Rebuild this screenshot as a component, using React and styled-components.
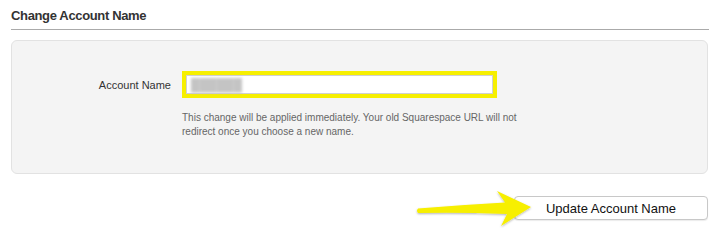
import React from "react";
import styled, { createGlobalStyle } from "styled-components";

const GlobalStyle = createGlobalStyle`
  html, body {
    margin: 0;
    padding: 0;
    background: #ffffff;
    font-family: "Liberation Sans", Arial, sans-serif;
  }
`;

const Page = styled.div`
  width: 717px;
  height: 228px;
  padding: 0 8px 0 11px;
  box-sizing: border-box;
  overflow: hidden;
`;

const Title = styled.h2`
  margin: 0;
  padding: 8px 0 5px;
  font-size: 13px;
  line-height: 16px;
  font-weight: bold;
  letter-spacing: -0.35px;
  color: #333;
  border-bottom: 1px solid #aaa;
`;

const Panel = styled.div`
  margin-top: 10px;
  margin-right: 1px;
  height: 134px;
  box-sizing: border-box;
  padding-top: 30px;
  background: #f4f4f4;
  border: 1px solid #e2e2e2;
  border-radius: 6px;
`;

const Row = styled.div`
  display: flex;
  align-items: center;
  gap: 11px;
`;

const Label = styled.label`
  width: 159px;
  text-align: right;
  font-size: 11px;
  color: #333;
`;

const Field = styled.div`
  width: 315px;
  height: 27px;
  box-sizing: border-box;
  border: 4px solid #f6ef00;
  background: #fff;
  box-shadow: inset 0 0 0 1px #d0d0d0;
  display: flex;
  align-items: center;
  padding-left: 5px;
`;

const Blurred = styled.span`
  font-size: 12px;
  line-height: 12px;
  color: #c4c4c4;
  filter: blur(1.5px);
`;

const Help = styled.p`
  margin: 13px 0 0 170px;
  width: 340px;
  font-size: 10px;
  line-height: 14px;
  color: #666;
`;

const Footer = styled.div`
  position: relative;
  display: flex;
  justify-content: flex-end;
  margin-top: 22px;
  margin-right: 1px;
`;

const Button = styled.button`
  width: 194px;
  height: 24px;
  background: #fff;
  border: 1px solid #c8c8c8;
  border-radius: 4px;
  font-family: "Liberation Sans", Arial, sans-serif;
  font-size: 13px;
  color: #111;
  box-shadow: 0 1px 1px rgba(0, 0, 0, 0.08);
`;

const Arrow = styled.svg`
  position: absolute;
  left: 404px;
  top: -11px;
  overflow: visible;
`;

export default function App() {
  return (
    <Page>
      <GlobalStyle />
      <Title>Change Account Name</Title>
      <Panel>
        <Row>
          <Label>Account Name</Label>
          <Field>
            <Blurred>██████</Blurred>
          </Field>
        </Row>
        <Help>
          This change will be applied immediately. Your old Squarespace URL will not
          redirect once you choose a new name.
        </Help>
      </Panel>
      <Footer>
        <Button>Update Account Name</Button>
        <Arrow width="120" height="42" viewBox="415 186 120 42">
          <defs>
            <filter id="sh" x="-10%" y="-30%" width="120%" height="160%">
              <feDropShadow dx="0" dy="1" stdDeviation="1" floodColor="#000" floodOpacity="0.3" />
            </filter>
          </defs>
          <path
            d="M418 209.5 Q460 206 505 203.5 L497 192 L531 208 L501 227 L507 215 Q460 213 418 214 Q416 211.8 418 209.5 Z"
            fill="#f7ef00"
            filter="url(#sh)"
          />
        </Arrow>
      </Footer>
    </Page>
  );
}
